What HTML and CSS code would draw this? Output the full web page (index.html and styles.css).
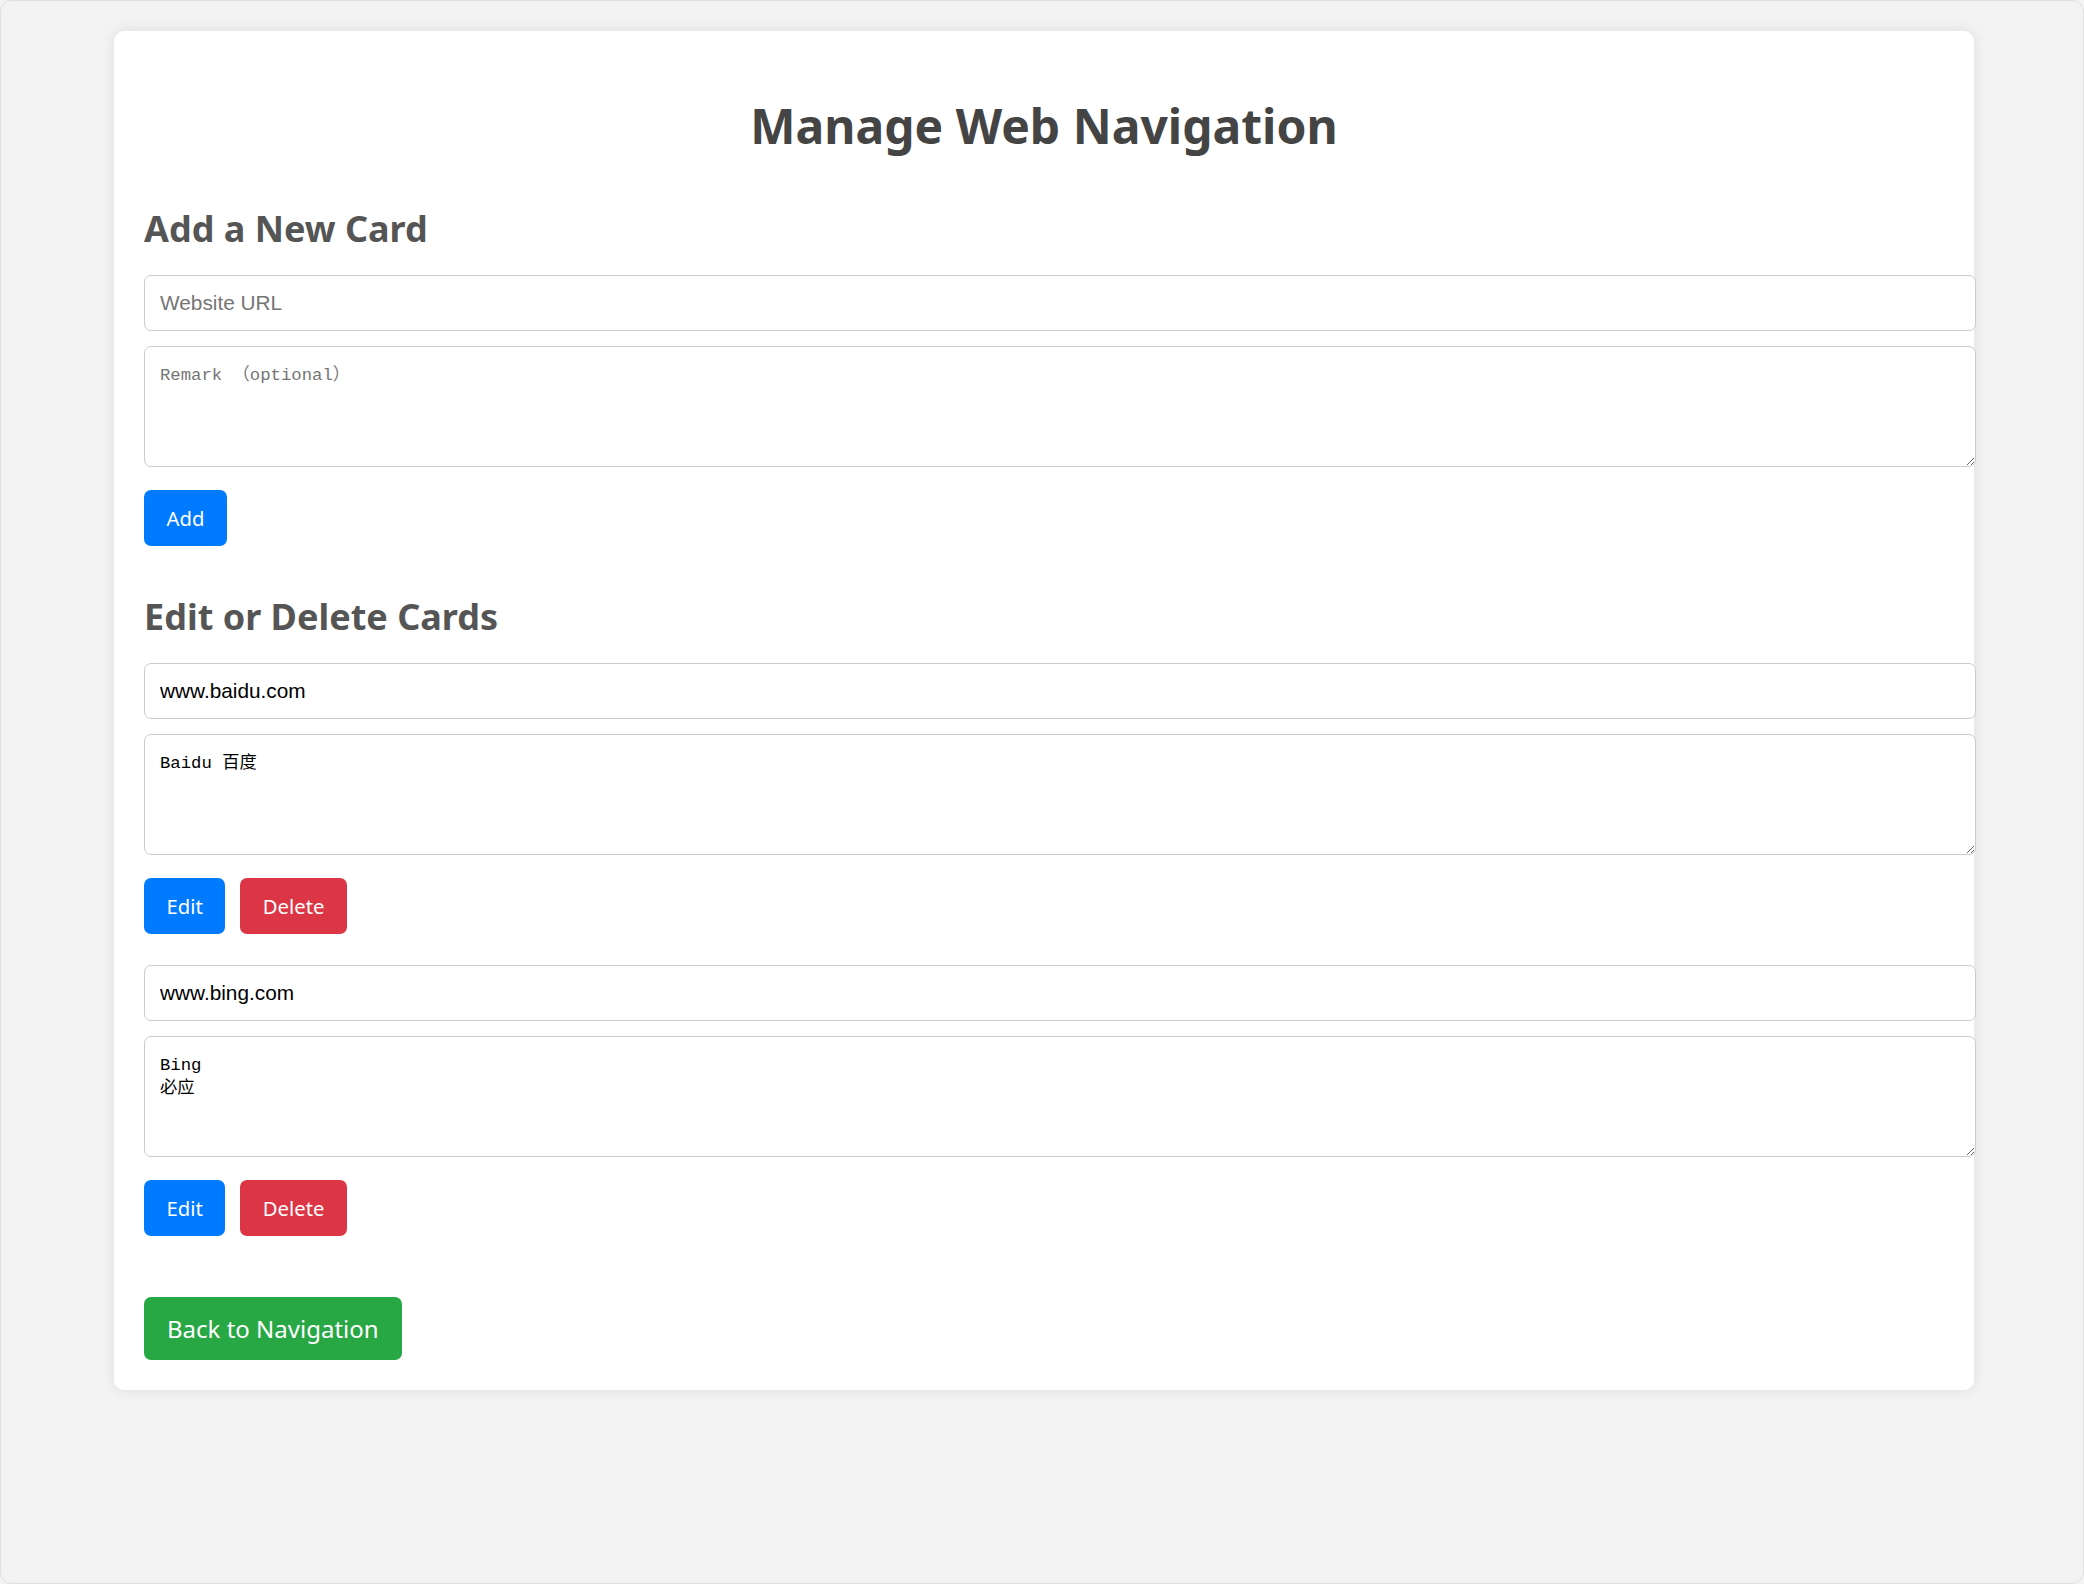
FILE: index.html
```html
<!DOCTYPE html>
<html lang="en">
<head>
<meta charset="utf-8">
<title>Manage Web Navigation</title>
<link rel="stylesheet" href="styles.css">
</head>
<body>
<div class="frame">
  <main class="card">
    <h1 class="title">Manage Web Navigation</h1>

    <section class="section">
      <h2 class="section-title">Add a New Card</h2>
      <input class="field" type="text" placeholder="Website URL">
      <textarea class="area" placeholder="Remark （optional）"></textarea>
      <div class="actions">
        <button class="btn btn-blue">Add</button>
      </div>
    </section>

    <section class="section section-edit">
      <h2 class="section-title">Edit or Delete Cards</h2>
      <div class="item">
        <input class="field" type="text" value="www.baidu.com">
        <textarea class="area">Baidu 百度</textarea>
        <div class="actions">
          <button class="btn btn-blue">Edit</button>
          <button class="btn btn-red">Delete</button>
        </div>
      </div>
      <div class="item">
        <input class="field" type="text" value="www.bing.com">
        <textarea class="area">Bing
必应</textarea>
        <div class="actions">
          <button class="btn btn-blue">Edit</button>
          <button class="btn btn-red">Delete</button>
        </div>
      </div>
    </section>

    <div class="back-row">
      <button class="btn btn-green btn-lg">Back to Navigation</button>
    </div>
  </main>
</div>
</body>
</html>
```

FILE: styles.css
```css
html, body {
  margin: 0;
  padding: 0;
  background: #f3f3f3;
}

body {
  font-family: "Noto Sans", "Open Sans", sans-serif;
}

.frame {
  box-sizing: border-box;
  min-height: 100vh;
  border: 1px solid #e0e0e0;
  border-radius: 12px;
  padding: 30px 0 0 4px;
}

.card {
  width: 1800px;
  margin: 0 auto;
  padding: 30px;
  background: #fff;
  border-radius: 10px;
  box-shadow: 0 0 14px rgba(0, 0, 0, 0.09);
}

.title {
  margin: 32px 0 0;
  font-size: 48px;
  line-height: 65px;
  font-weight: 700;
  color: #444;
  text-align: center;
}

.section-title {
  margin: 0 0 22px;
  font-size: 36px;
  line-height: 49px;
  font-weight: 700;
  color: #555;
}

.section {
  margin-top: 46px;
}

.section-edit {
  margin-top: 46px;
}

.section-edit .section-title {
  margin-bottom: 22px;
}

.field {
  display: block;
  width: 100%;
  height: 24px;
  margin: 0 0 15px;
  padding: 15px;
  border: 1px solid #ccc;
  border-radius: 7px;
  font-family: "Liberation Sans", Arial, sans-serif;
  font-size: 20.8px;
  line-height: 24px;
  color: #000;
  background: #fff;
  outline: none;
}

.field::placeholder {
  color: #757575;
}

.area {
  display: block;
  width: 100%;
  height: 87px;
  margin: 0 0 23px;
  padding: 17px 15px 15px;
  border: 1px solid #ccc;
  border-radius: 7px;
  font-family: "Liberation Mono", "Noto Sans CJK SC", monospace;
  font-size: 17.3px;
  line-height: 23px;
  color: #000;
  background: #fff;
  outline: none;
}

.area::placeholder {
  color: #757575;
}

.actions {
  display: flex;
  gap: 15px;
}

.item + .item {
  margin-top: 31px;
}

.btn {
  border: 0;
  border-radius: 7px;
  padding: 13.5px 22.5px;
  font-family: "Noto Sans", "Open Sans", sans-serif;
  font-size: 20.3px;
  line-height: 29px;
  color: #fff;
  cursor: pointer;
}

.btn-blue { background: #007bff; }
.btn-red { background: #dc3545; }
.btn-green { background: #28a745; }

.btn-lg {
  font-size: 24px;
  line-height: 34px;
  padding: 14.5px 23px;
}

.back-row {
  margin-top: 61px;
  display: flex;
}
```
